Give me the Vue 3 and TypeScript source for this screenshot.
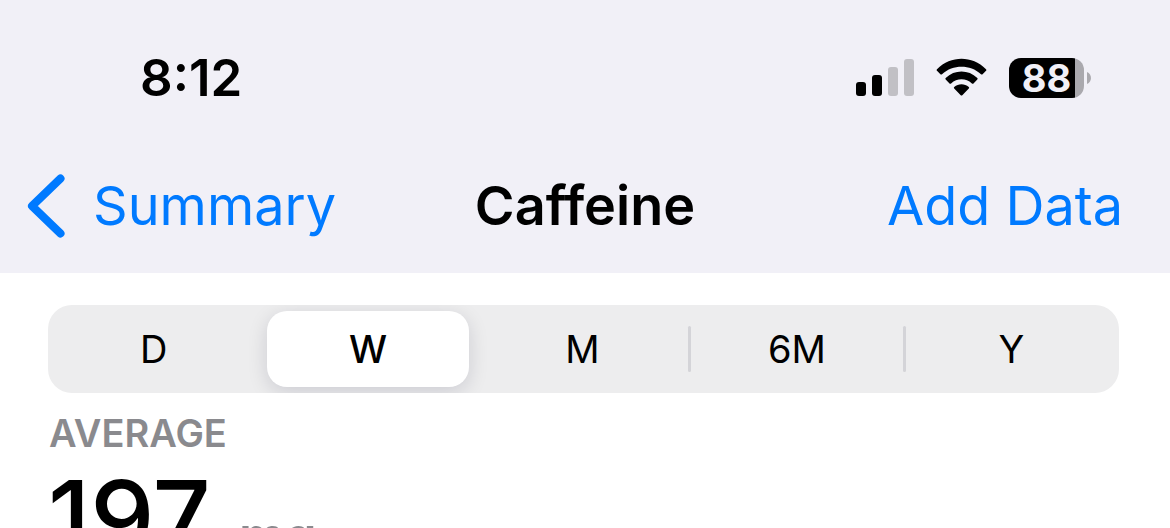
<script setup lang="ts">
import { ref } from 'vue'

interface Range {
  id: string
  divided: boolean
}

const ranges: Range[] = [
  { id: 'D', divided: false },
  { id: 'W', divided: false },
  { id: 'M', divided: false },
  { id: '6M', divided: true },
  { id: 'Y', divided: true },
]
const selected = ref<string>('W')
</script>

<template>
  <div class="screen">
    <header class="top">
      <div class="status">
        <time class="clock">8:12</time>
        <div class="indicators">
          <svg class="signal" width="60" height="40" viewBox="0 0 60 40" role="img" aria-label="Signal">
            <rect x="1" y="24" width="10" height="14" rx="3" />
            <rect x="17" y="17" width="10" height="21" rx="3" />
            <rect x="33" y="9" width="10" height="29" rx="3" fill="#c1c0c5" />
            <rect x="49" y="1" width="10" height="37" rx="3" fill="#c1c0c5" />
          </svg>
          <svg class="wifi" width="52" height="40" viewBox="0 0 52 40" role="img" aria-label="Wi-Fi">
            <path d="M1 11.2C15 -2.6 36 -2.6 50 11.2Q50.8 12 50 12.8L46.6 16.2Q45.8 16.9 45 16.2C34 6.4 17 6.4 6 16.2Q5.2 16.9 4.4 16.2L1 12.8Q.2 12 1 11.2Z" />
            <path d="M9.7 20C18.5 11.4 32.5 11.4 41.3 20Q42.1 20.8 41.3 21.6L37.5 25.4Q36.7 26.1 35.9 25.4C30 20 21 20 15.1 25.4Q14.3 26.1 13.5 25.4L9.7 21.6Q8.9 20.8 9.7 20Z" />
            <path d="M18.2 28.9C22.5 25.4 28.5 25.4 32.8 28.9Q33.6 29.6 32.8 30.4L26.3 37.2Q25.5 38 24.7 37.2L18.2 30.4Q17.4 29.6 18.2 28.9Z" />
          </svg>
          <div class="battery">
            <span class="level">88</span>
            <svg class="tip" width="4" height="12" viewBox="0 0 4 12" aria-hidden="true">
              <path d="M0 0C5.3 2 5.3 10 0 12Z" fill="#aaa9ae" />
            </svg>
          </div>
        </div>
      </div>
      <nav class="nav">
        <a class="back" href="#summary">
          <svg width="38" height="64" viewBox="0 0 38 64" aria-hidden="true">
            <path d="M33.5 4.5L5 32L33.5 59.5" fill="none" stroke="currentColor" stroke-width="8" stroke-linecap="round" stroke-linejoin="round" />
          </svg>
          <span>Summary</span>
        </a>
        <h1 class="title">Caffeine</h1>
        <button class="add" type="button">Add Data</button>
      </nav>
    </header>

    <main class="content">
      <div class="segments" role="radiogroup" aria-label="Time range">
        <label v-for="range in ranges" :key="range.id" class="segment" :class="{ divided: range.divided }">
          <input v-model="selected" type="radio" name="range" :value="range.id" />
          <span class="thumb">{{ range.id }}</span>
        </label>
      </div>
      <section class="summary">
        <h2 class="label">AVERAGE</h2>
        <p class="reading">
          <span class="value">197</span>
          <span class="unit">mg</span>
        </p>
      </section>
    </main>
  </div>
</template>

<style>
body {
  margin: 0;
  background: #fff;
}
</style>

<style scoped>
.screen {
  height: 100vh;
  overflow: hidden;
  color: #000;
  background: #fff;
  font-family: Inter, "Liberation Sans", sans-serif;
}
.top {
  background: #f1f0f7;
  padding-bottom: 30px;
}
.status {
  display: flex;
  align-items: center;
  justify-content: space-between;
  padding: 48px 79px 0 140px;
  height: 60px;
}
.clock {
  font-size: 51px;
  line-height: 60px;
  font-weight: 600;
}
.indicators {
  display: flex;
  align-items: center;
  gap: 21px;
}
.battery {
  display: flex;
  align-items: center;
  gap: 3px;
}
.level {
  box-sizing: border-box;
  width: 75px;
  height: 40px;
  border-radius: 12px;
  background: linear-gradient(to right, #000 66px, #aaa9ae 66px);
  color: #f1f0f7;
  font-size: 38px;
  line-height: 40px;
  font-weight: 700;
  text-align: center;
}
.nav {
  display: grid;
  grid-template-columns: 1fr auto 1fr;
  align-items: center;
  padding: 60px 27px 0 27px;
  line-height: 75px;
  font-size: 54px;
}
.back {
  display: flex;
  align-items: center;
  gap: 28px;
  color: #007aff;
  text-decoration: none;
}
.title {
  margin: 0;
  font-size: 54px;
  font-weight: 600;
}
.add {
  justify-self: end;
  margin: 0 20px 0 0;
  padding: 0;
  border: 0;
  background: none;
  color: #007aff;
  font: inherit;
}
.content {
  padding: 32px 51px 0 48px;
}
.segments {
  display: grid;
  grid-template-columns: repeat(5, 1fr);
  gap: 3px;
  padding-right: 2px;
  border-radius: 24px;
  background: #ededee;
  overflow: hidden;
}
.segment {
  position: relative;
  padding: 6px 5px;
  cursor: pointer;
}
.segment input {
  position: absolute;
  opacity: 0;
  margin: 0;
}
.divided::before {
  content: "";
  position: absolute;
  left: -3px;
  top: 21px;
  bottom: 21px;
  width: 3px;
  border-radius: 2px;
  background: #d4d4d8;
}
.thumb {
  display: block;
  border-radius: 20px;
  font-size: 38px;
  line-height: 76px;
  font-weight: 400;
  text-align: center;
}
.segment input:checked + .thumb {
  background: #fff;
  font-weight: 500;
  box-shadow: 0 5px 20px rgba(0, 0, 40, 0.14);
}
.label {
  margin: 16px 0 0 1px;
  color: #8a8a8e;
  font-size: 38px;
  line-height: 48px;
  font-weight: 600;
}
.reading {
  display: flex;
  align-items: baseline;
  gap: 28px;
  margin: 0;
  line-height: 120px;
  white-space: nowrap;
}
.value {
  font-size: 102px;
  font-weight: 500;
}
.unit {
  color: #8a8a8e;
  font-size: 51px;
  font-weight: 600;
}
</style>
